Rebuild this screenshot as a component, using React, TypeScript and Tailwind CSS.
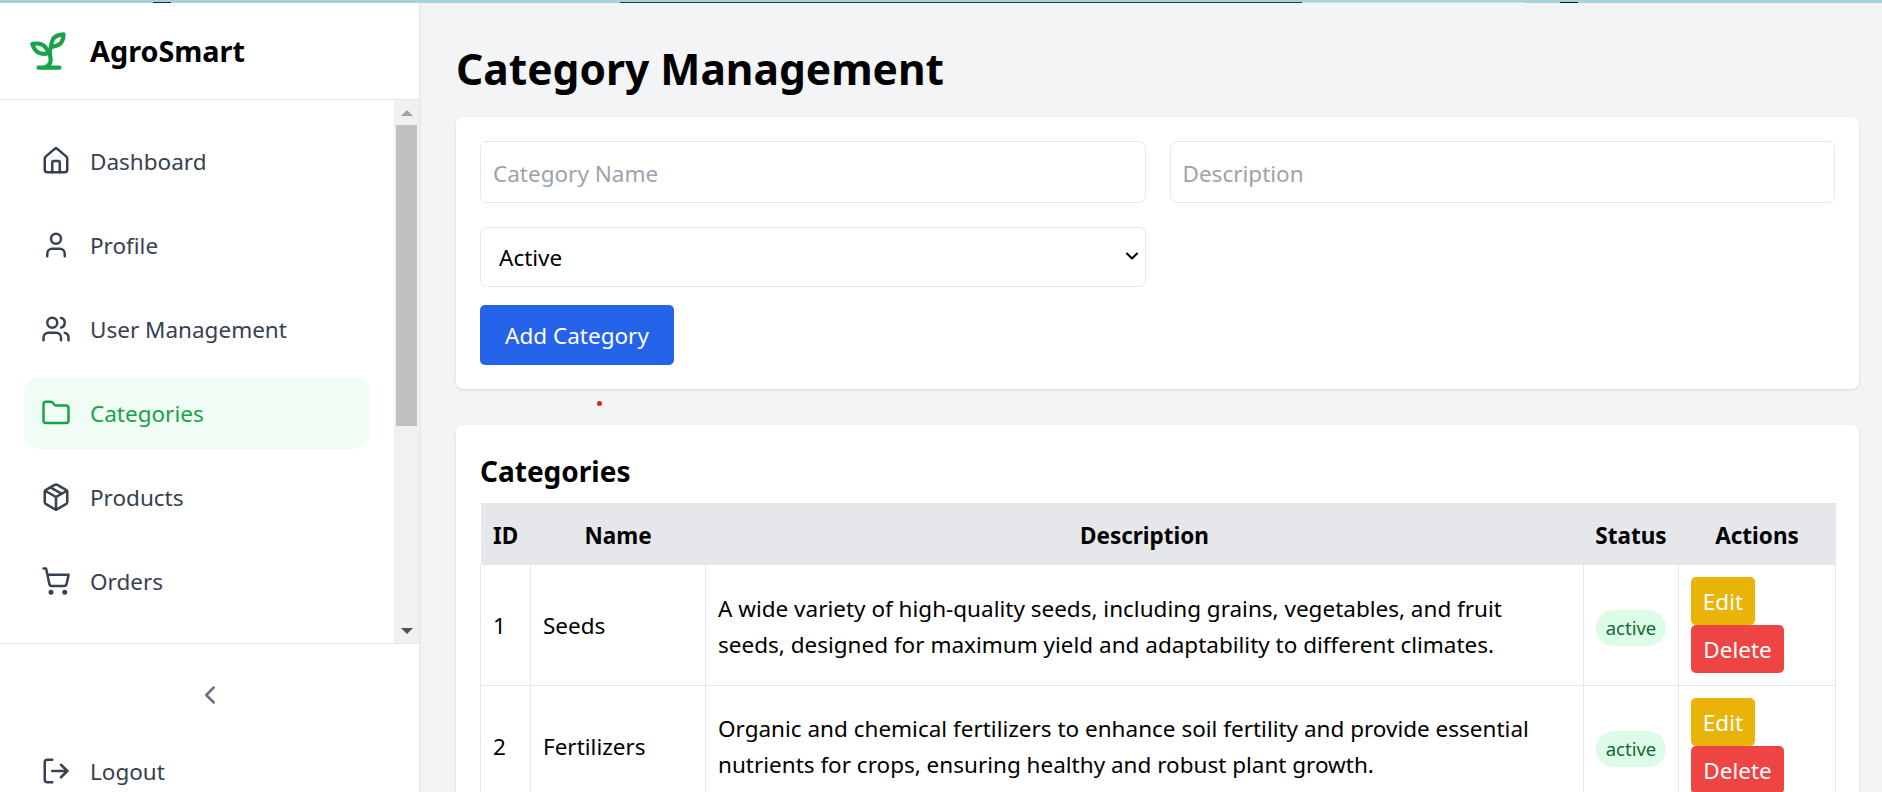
import { ChevronDown, ChevronLeft, Folder, House, LogOut, Package, ShoppingCart, User, Users } from "lucide-react";

const navItems = [
  { label: "Dashboard", icon: House },
  { label: "Profile", icon: User },
  { label: "User Management", icon: Users },
  { label: "Categories", icon: Folder, active: true },
  { label: "Products", icon: Package },
  { label: "Orders", icon: ShoppingCart },
];

const rows = [
  {
    id: 1,
    name: "Seeds",
    description:
      "A wide variety of high-quality seeds, including grains, vegetables, and fruit seeds, designed for maximum yield and adaptability to different climates.",
  },
  {
    id: 2,
    name: "Fertilizers",
    description:
      "Organic and chemical fertilizers to enhance soil fertility and provide essential nutrients for crops, ensuring healthy and robust plant growth.",
  },
];

const SproutLogo = () => (
  <svg
    width="50"
    height="50"
    viewBox="0 0 24 24"
    fill="none"
    stroke="currentColor"
    strokeWidth="2"
    strokeLinecap="round"
    strokeLinejoin="round"
    className="shrink-0 text-[#16a34a]"
  >
    <path d="M7 20h10" />
    <path d="M10 20c5.5-2.5.8-6.4 3-10" />
    <path d="M9.5 9.4c1.1.8 1.8 2.2 2.3 3.7-2 .4-3.5.4-4.8-.3-1.2-.6-2.3-1.9-3-4.2 2.8-.5 4.4 0 5.5.8z" />
    <path d="M14.1 6a7 7 0 0 0-1.1 4c1.9-.1 3.3-.6 4.3-1.4 1-1 1.6-2.3 1.7-4.6-2.7.1-4 1-4.9 2z" />
  </svg>
);

const App = () => {
  return (
    <div className="h-screen overflow-hidden bg-[#f3f4f6] font-['Noto_Sans',sans-serif] text-black">
      {/* Strip of the window behind, top edge */}
      <div className="relative h-[3px] bg-[#a3d3d6]">
        <div className="absolute top-[2px] left-[153px] h-[1px] w-[18px] bg-[#1f2a2c]" />
        <div className="absolute top-[2px] left-[620px] h-[1px] w-[682px] bg-[#27393b]" />
        <div className="absolute top-[2px] left-[1302px] h-[1px] w-[223px] bg-[#d9dcdd]" />
        <div className="absolute top-[2px] left-[1560px] h-[1px] w-[18px] bg-[#111111]" />
      </div>

      <div className="flex h-[789px]">
        {/* Sidebar */}
        <aside className="flex w-[419px] shrink-0 flex-col bg-white shadow-[1px_0_3px_rgba(0,0,0,0.08)]">
          <div className="flex h-[97px] shrink-0 items-center gap-[16px] border-b border-[#e5e7eb] pl-[24px]">
            <SproutLogo />
            <span className="pt-[1px] text-[28.8px] leading-none font-bold">AgroSmart</span>
          </div>

          <div className="flex h-[544px] shrink-0 border-b border-[#e5e7eb]">
            <nav className="flex flex-1 flex-col gap-3 pt-[25px] pl-[24px] pr-[24px]">
              {navItems.map((item) => {
                const Icon = item.icon;
                return (
                  <div
                    key={item.label}
                    className={
                      item.active
                        ? "flex h-[72px] shrink-0 items-center gap-[19px] rounded-[15px] bg-[#f0fdf4] pl-[17px] text-[#16a34a]"
                        : "flex h-[72px] shrink-0 items-center gap-[19px] pl-[17px] text-[#374151]"
                    }
                  >
                    <Icon size={30} strokeWidth={2} className="shrink-0" />
                    <span className="pt-[1px] text-[22.5px]">{item.label}</span>
                  </div>
                );
              })}
            </nav>

            {/* Scrollbar */}
            <div className="flex w-[25px] shrink-0 flex-col items-center bg-[#f1f1f1] px-[2px]">
              <div className="flex h-[25px] w-full items-center justify-center">
                <div className="h-0 w-0 border-x-[6px] border-b-[6px] border-x-transparent border-b-[#a3a3a3]" />
              </div>
              <div className="h-[301px] w-full bg-[#c1c1c1]" />
              <div className="flex-1" />
              <div className="flex h-[25px] w-full items-center justify-center">
                <div className="h-0 w-0 border-x-[6px] border-t-[6px] border-x-transparent border-t-[#505050]" />
              </div>
            </div>
          </div>

          <div className="flex h-[102px] shrink-0 items-center justify-center">
            <ChevronLeft size={30} strokeWidth={2} className="text-[#6b7280]" />
          </div>
          <div className="flex h-[50px] items-center gap-[19px] pl-[41px] text-[#374151]">
            <LogOut size={30} strokeWidth={2} className="mt-[3px] shrink-0" />
            <span className="pt-[6px] text-[22.5px]">Logout</span>
          </div>
        </aside>

        {/* Main */}
        <main className="min-w-0 flex-1 pl-[37px] pr-[23px]">
          <h1 className="flex h-[114px] items-center pt-[19px] text-[42.5px] leading-none font-bold">
            Category Management
          </h1>

          <section className="rounded-[7px] bg-white p-[24px] shadow-[0_1px_3px_rgba(0,0,0,0.12)]">
            <div className="grid grid-cols-2 gap-x-[24px] gap-y-[24px]">
              <input
                placeholder="Category Name"
                className="h-[62px] rounded-[7px] border border-[#e5e7eb] px-[12px] pt-[2px] text-[22.5px] placeholder:text-[#9ca3af]"
              />
              <input
                placeholder="Description"
                className="h-[62px] rounded-[7px] border border-[#e5e7eb] px-[12px] pt-[2px] text-[22.5px] placeholder:text-[#9ca3af]"
              />
              <div className="relative">
                <select
                  defaultValue="Active"
                  className="h-[60px] w-full appearance-none rounded-[7px] border border-[#e5e7eb] bg-white pt-[2px] pl-[18px] text-[22.5px]"
                >
                  <option>Active</option>
                  <option>Inactive</option>
                </select>
                <ChevronDown size={20} strokeWidth={2.4} className="absolute top-[19px] right-[4px] text-black" />
              </div>
            </div>
            <button className="mt-[18px] h-[60px] w-[194px] rounded-[5px] bg-[#2563eb] pt-[2px] text-[22.5px] text-white">
              Add Category
            </button>
          </section>

          <div className="relative h-[36px]">
            <div className="absolute top-[12px] left-[141px] size-[5px] rounded-full bg-[#e11d28]" />
          </div>

          <section className="rounded-[7px] bg-white px-[24px] pt-[24px] shadow-[0_1px_3px_rgba(0,0,0,0.12)]">
            <h2 className="mb-[11px] pt-[2px] text-[28px] leading-[41px] font-bold">Categories</h2>
            <table className="w-[1355px] table-fixed border-collapse text-[22.5px]">
              <colgroup>
                <col className="w-[50px]" />
                <col className="w-[175px]" />
                <col className="w-[878px]" />
                <col className="w-[95px]" />
                <col className="w-[157px]" />
              </colgroup>
              <thead>
                <tr className="h-[62px] bg-[#e5e7eb] font-bold">
                  <th className="px-[12px] pt-[3px]">ID</th>
                  <th className="px-[12px] pt-[3px]">Name</th>
                  <th className="px-[12px] pt-[3px]">Description</th>
                  <th className="whitespace-nowrap pt-[3px]">Status</th>
                  <th className="px-[12px] pt-[3px]">Actions</th>
                </tr>
              </thead>
              <tbody>
                {rows.map((row) => (
                  <tr key={row.id} className="h-[120px] border-b border-[#e5e7eb]">
                    <td className="border-x border-[#e5e7eb] px-[12px] pt-[3px]">{row.id}</td>
                    <td className="border-x border-[#e5e7eb] px-[12px] pt-[3px]">{row.name}</td>
                    <td className="border-x border-[#e5e7eb] pt-[4px] pr-[20px] pl-[12px] leading-[36px]">
                      {row.description}
                    </td>
                    <td className="border-x border-[#e5e7eb] px-[12px] pt-[7px]">
                      <span className="flex h-[36px] w-[70px] items-center justify-center rounded-full bg-[#dcfce7] text-[18.5px] text-[#166534]">
                        active
                      </span>
                    </td>
                    <td className="border-x border-[#e5e7eb] px-[12px] align-top">
                      <div className="flex flex-col items-start pt-[12px]">
                        <button className="h-[48px] w-[64px] rounded-[5px] bg-[#eab308] pt-[2px] text-[22.5px] text-white">
                          Edit
                        </button>
                        <button className="h-[48px] w-[93px] rounded-[5px] bg-[#ef4444] pt-[2px] text-[22.5px] text-white">
                          Delete
                        </button>
                      </div>
                    </td>
                  </tr>
                ))}
              </tbody>
            </table>
          </section>
        </main>
      </div>
    </div>
  );
};

export default App;
